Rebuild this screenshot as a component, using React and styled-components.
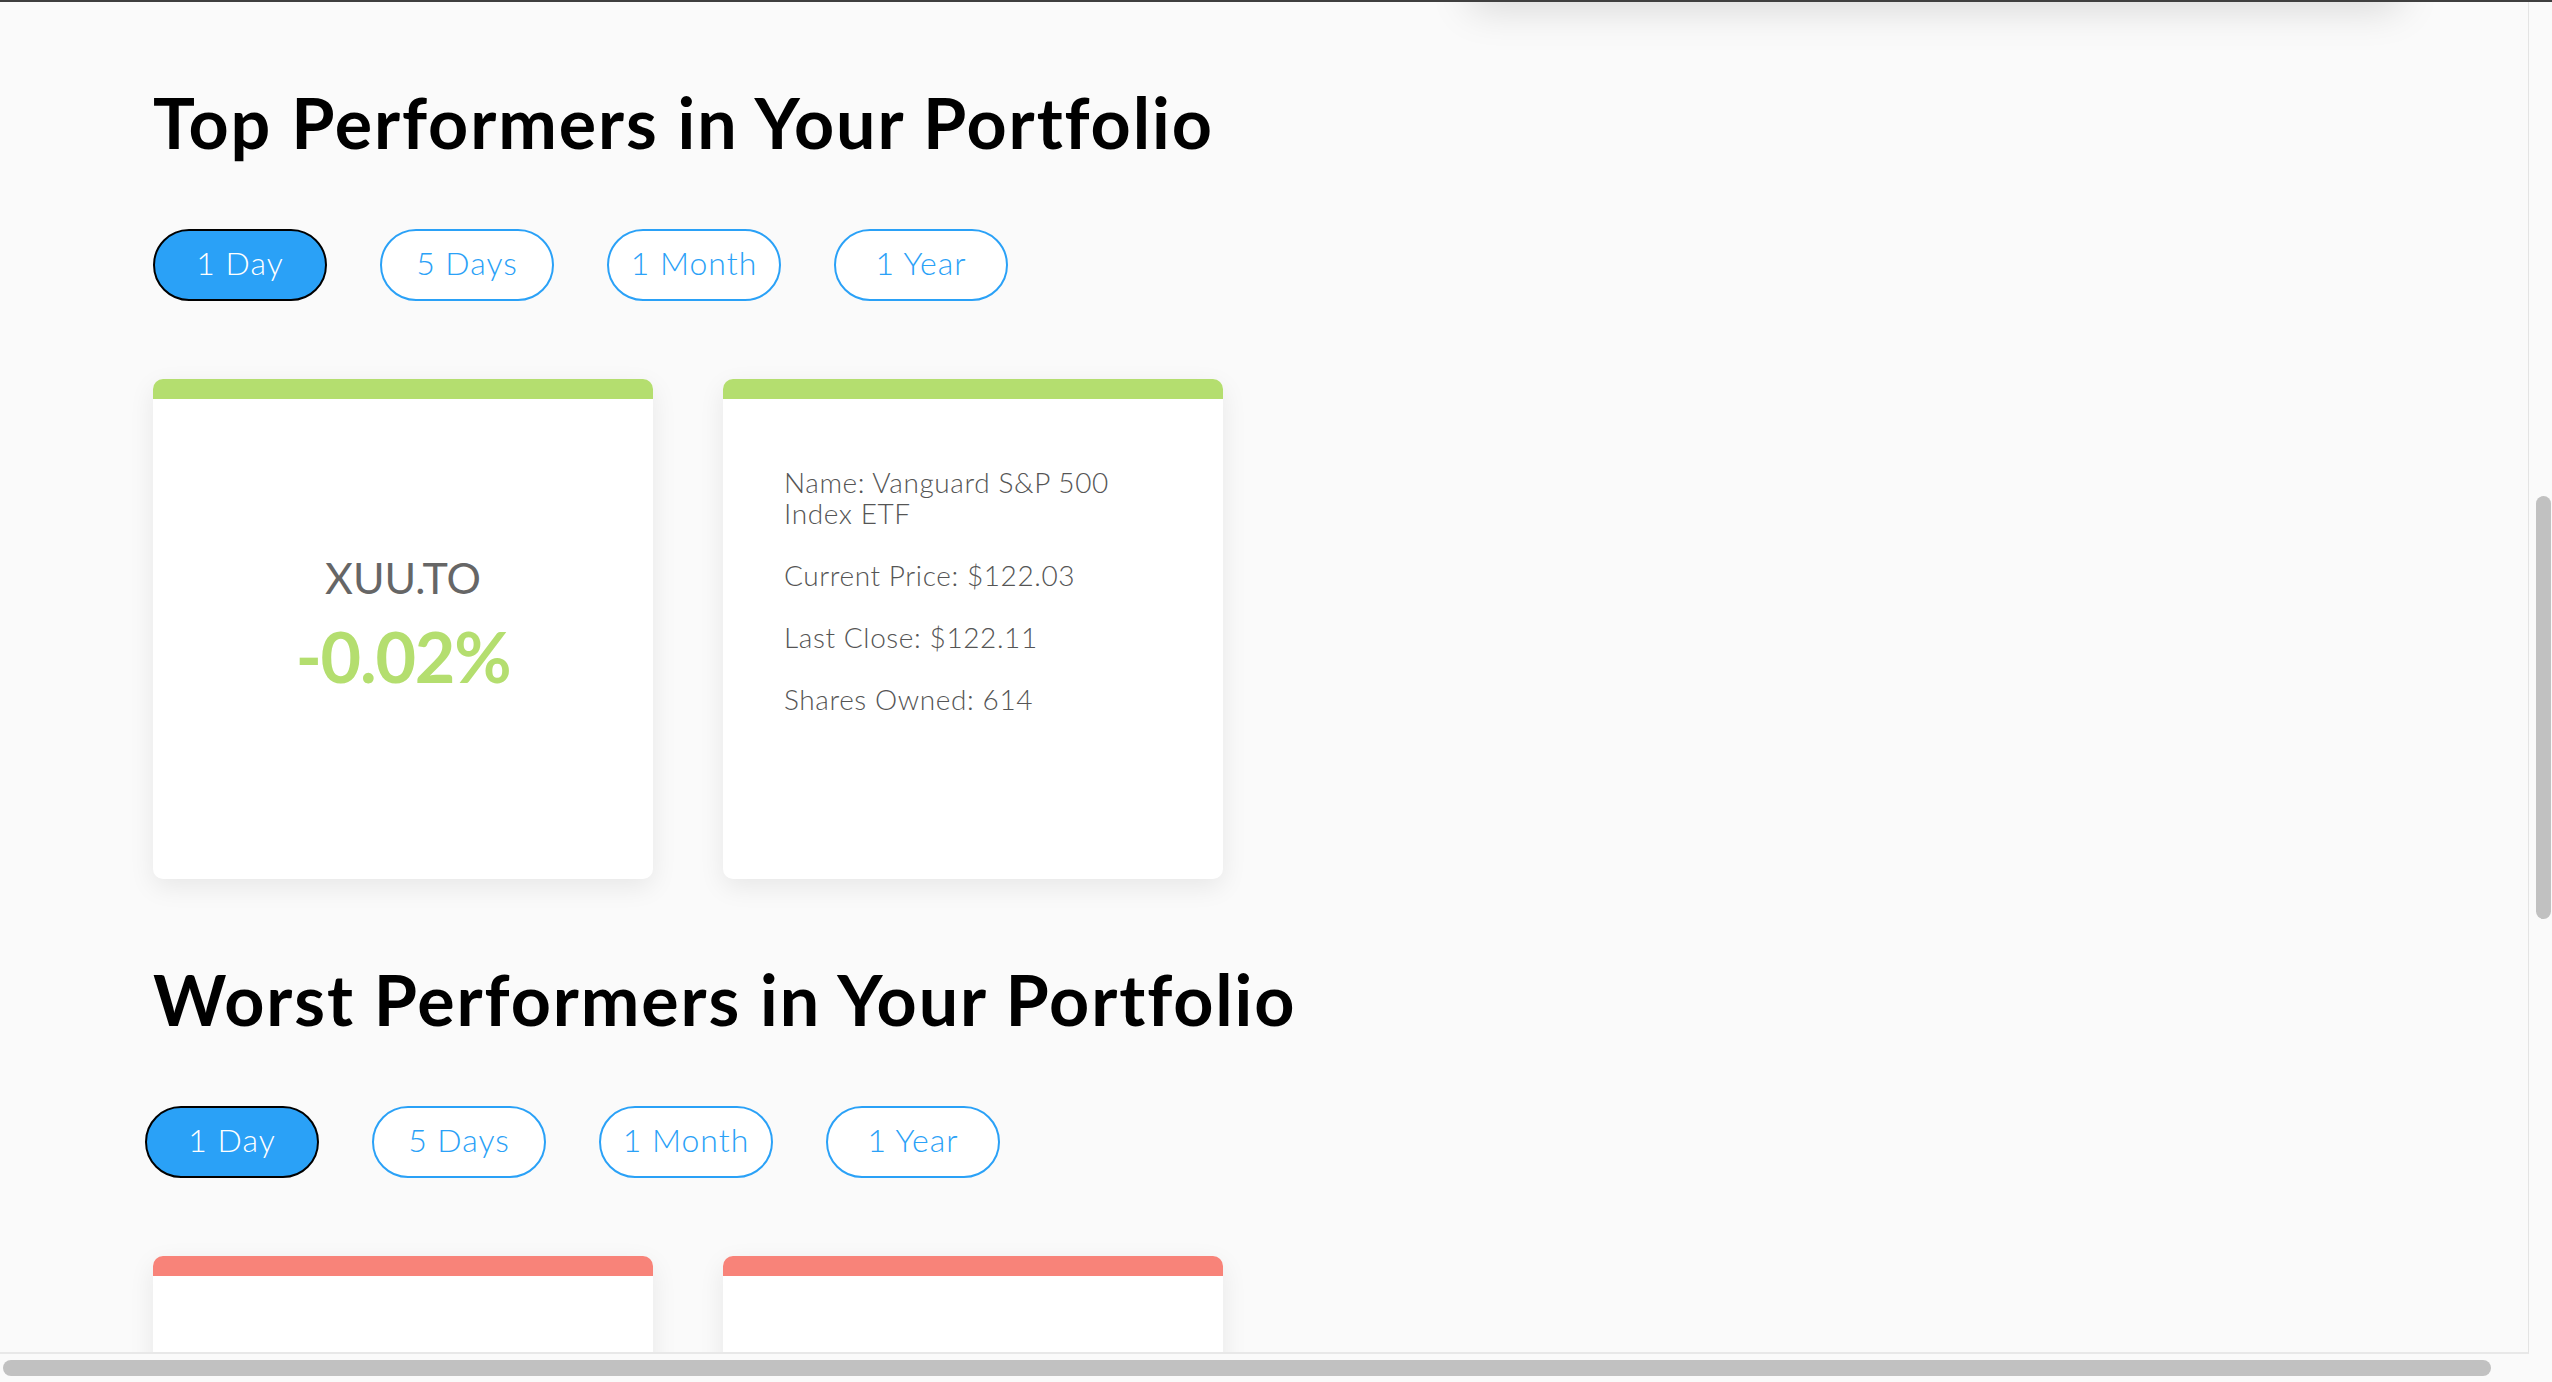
import React from 'react';
import styled, { createGlobalStyle } from 'styled-components';

const GlobalStyle = createGlobalStyle`
  html, body {
    margin: 0;
    padding: 0;
    overflow: hidden;
    background-color: #fafafa;
  }
  * {
    box-sizing: border-box;
  }
`;

const BLUE = '#2aa1f7';
const GREEN = '#b4de6f';
const RED = '#f88379';
const FONT = `'Lato', 'Noto Sans', sans-serif`;

const Frame = styled.div`
  display: grid;
  grid-template-columns: 1fr 23px;
  grid-template-rows: 1352px 28px;
  height: 100vh;
  border-top: 2px solid #3f3f3f;
  background-color: #fafafa;
  font-family: ${FONT};
`;

const Viewport = styled.div`
  overflow: hidden;
  border-right: 1px solid #e4e4e4;
  border-bottom: 2px solid #e8e8e8;
`;

// bottom edge of a panel scrolled out of view, only its shadow shows
const ShadowEdge = styled.div`
  height: 40px;
  width: 930px;
  margin: -40px 0 0 1470px;
  background-color: #fff;
  box-shadow: 0 6px 40px rgba(0, 0, 0, 0.15);
`;

const Main = styled.main`
  padding-left: 153px;
`;

const Section = styled.section`
  display: flex;
  flex-direction: column;
  align-items: flex-start;
`;

const Heading = styled.h1`
  margin: 80px 0 0 0;
  font-size: 70px;
  line-height: 80px;
  font-weight: 700;
  color: #000;
  letter-spacing: 1.9px;
`;

const ButtonRow = styled.div`
  display: flex;
  gap: 53px;
  margin-top: 67px;
  margin-left: ${(p) => p.$shift || 0}px;
`;

const RangeButton = styled.button`
  width: 174px;
  height: 72px;
  border-radius: 36px;
  border: 2px solid ${(p) => (p.$active ? '#000' : BLUE)};
  background-color: ${(p) => (p.$active ? BLUE : '#fff')};
  color: ${(p) => (p.$active ? '#fff' : BLUE)};
  font-family: ${FONT};
  font-size: 32px;
  font-weight: 300;
  letter-spacing: 1px;
  line-height: 1;
  padding: 0 0 4px 0;
  cursor: pointer;
`;

const CardRow = styled.div`
  display: flex;
  gap: 70px;
  margin-top: 78px;
`;

const Card = styled.div`
  width: 500px;
  height: 500px;
  background-color: #fff;
  border-radius: 10px;
  overflow: hidden;
  box-shadow: 0 8px 26px rgba(0, 0, 0, 0.08);
  display: flex;
  flex-direction: column;
`;

const CardBar = styled.div`
  height: 20px;
  flex-shrink: 0;
  background-color: ${(p) => p.$color};
`;

const SummaryBody = styled.div`
  display: flex;
  flex-direction: column;
  align-items: center;
  padding-top: 154px;
`;

const Ticker = styled.div`
  font-size: 43px;
  line-height: 50px;
  color: #666;
  font-weight: 400;
`;

const Change = styled.div`
  margin-top: 13px;
  font-size: 70px;
  line-height: 80px;
  font-weight: 700;
  letter-spacing: -1.2px;
  color: ${(p) => p.$color};
`;

const DetailBody = styled.div`
  padding: 68px 61px 0 61px;
`;

const Detail = styled.p`
  margin: 0 0 31px 0;
  font-size: 28px;
  line-height: 31px;
  font-weight: 300;
  letter-spacing: 0.6px;
  color: #555;
`;

const VGutter = styled.div`
  padding: 494px 0 0 7px;
`;

const VThumb = styled.div`
  width: 15px;
  height: 423px;
  border-radius: 8px;
  background-color: #c1c1c1;
`;

const HGutter = styled.div`
  padding: 6px 0 0 3px;
`;

const HThumb = styled.div`
  width: 2488px;
  height: 16px;
  border-radius: 8px;
  background-color: #c1c1c1;
`;

const Corner = styled.div``;

const ranges = ['1 Day', '5 Days', '1 Month', '1 Year'];

const PerformerSection = ({ title, color, shift, cards }) => (
  <Section>
    <Heading>{title}</Heading>
    <ButtonRow $shift={shift}>
      {ranges.map((r, i) => (
        <RangeButton key={r} $active={i === 0}>
          {r}
        </RangeButton>
      ))}
    </ButtonRow>
    <CardRow>
      {cards.map((c, i) => (
        <Card key={i}>
          <CardBar $color={color} />
          {c.ticker ? (
            <SummaryBody>
              <Ticker>{c.ticker}</Ticker>
              <Change $color={color}>{c.change}</Change>
            </SummaryBody>
          ) : c.details ? (
            <DetailBody>
              {c.details.map((d) => (
                <Detail key={d}>{d}</Detail>
              ))}
            </DetailBody>
          ) : null}
        </Card>
      ))}
    </CardRow>
  </Section>
);

const App = () => {
  return (
    <>
      <GlobalStyle />
      <Frame>
        <Viewport>
          <ShadowEdge />
          <Main>
            <PerformerSection
              title="Top Performers in Your Portfolio"
              color={GREEN}
              cards={[
                { ticker: 'XUU.TO', change: '-0.02%' },
                {
                  details: [
                    'Name: Vanguard S&P 500 Index ETF',
                    'Current Price: $122.03',
                    'Last Close: $122.11',
                    'Shares Owned: 614',
                  ],
                },
              ]}
            />
            <PerformerSection
              title="Worst Performers in Your Portfolio"
              color={RED}
              shift={-8}
              cards={[{}, {}]}
            />
          </Main>
        </Viewport>
        <VGutter>
          <VThumb />
        </VGutter>
        <HGutter>
          <HThumb />
        </HGutter>
        <Corner />
      </Frame>
    </>
  );
};

export default App;
